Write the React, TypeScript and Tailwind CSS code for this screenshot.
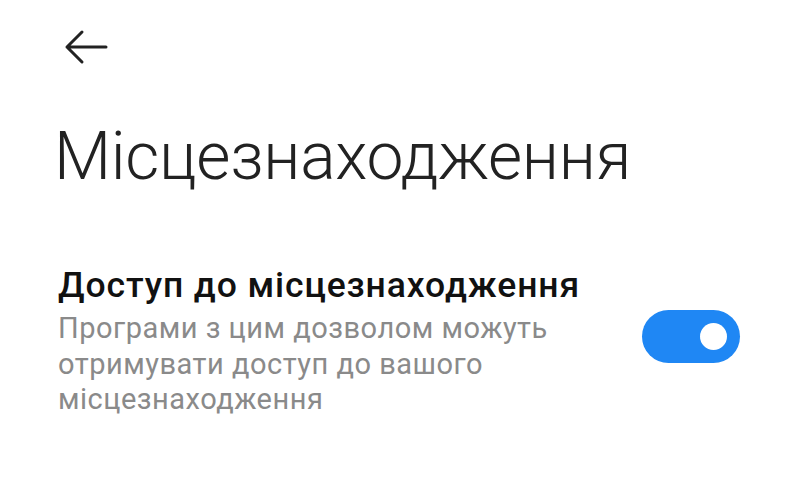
import React from "react";

function BackArrow() {
  return (
    <svg width="48" height="36" viewBox="0 0 48 36" fill="none" className="block">
      <path
        d="M44 18H5M20 3L5 18l15 15"
        stroke="#222222"
        strokeWidth="3"
        strokeLinecap="round"
        strokeLinejoin="round"
      />
    </svg>
  );
}

function Toggle({ on }: { on: boolean }) {
  return (
    <div
      className={
        "flex h-[53px] w-[98px] shrink-0 items-center rounded-full px-[13px] " +
        (on ? "justify-end bg-[#1f87f4]" : "justify-start bg-[#d0d0d0]")
      }
    >
      <div className="h-[27px] w-[27px] rounded-full bg-white" />
    </div>
  );
}

export default function App() {
  return (
    <div
      className="h-[488px] w-[800px] overflow-hidden bg-white"
      style={{ fontFamily: "Roboto, 'Noto Sans', sans-serif" }}
    >
      <div className="pl-[62px] pt-[29px]">
        <BackArrow />
      </div>
      <h1 className="mt-[52px] pl-[54px] text-[66px] font-light leading-[80px] tracking-[-0.3px] text-[#222222]">
        Місцезнаходження
      </h1>
      <div className="mt-[67px] flex items-start justify-between pl-[58px] pr-[60px]">
        <div className="flex flex-col">
          <div className="whitespace-nowrap text-[35.5px] font-medium leading-[42px] tracking-[0.9px] text-[#111111]">
            Доступ до місцезнаходження
          </div>
          <div className="mt-[5px] w-[520px] text-[29px] leading-[35.5px] tracking-[0.5px] text-[#8a8a8a]">
            Програми з цим дозволом можуть отримувати доступ до вашого
            місцезнаходження
          </div>
        </div>
        <div className="mt-[46px]">
          <Toggle on />
        </div>
      </div>
    </div>
  );
}
